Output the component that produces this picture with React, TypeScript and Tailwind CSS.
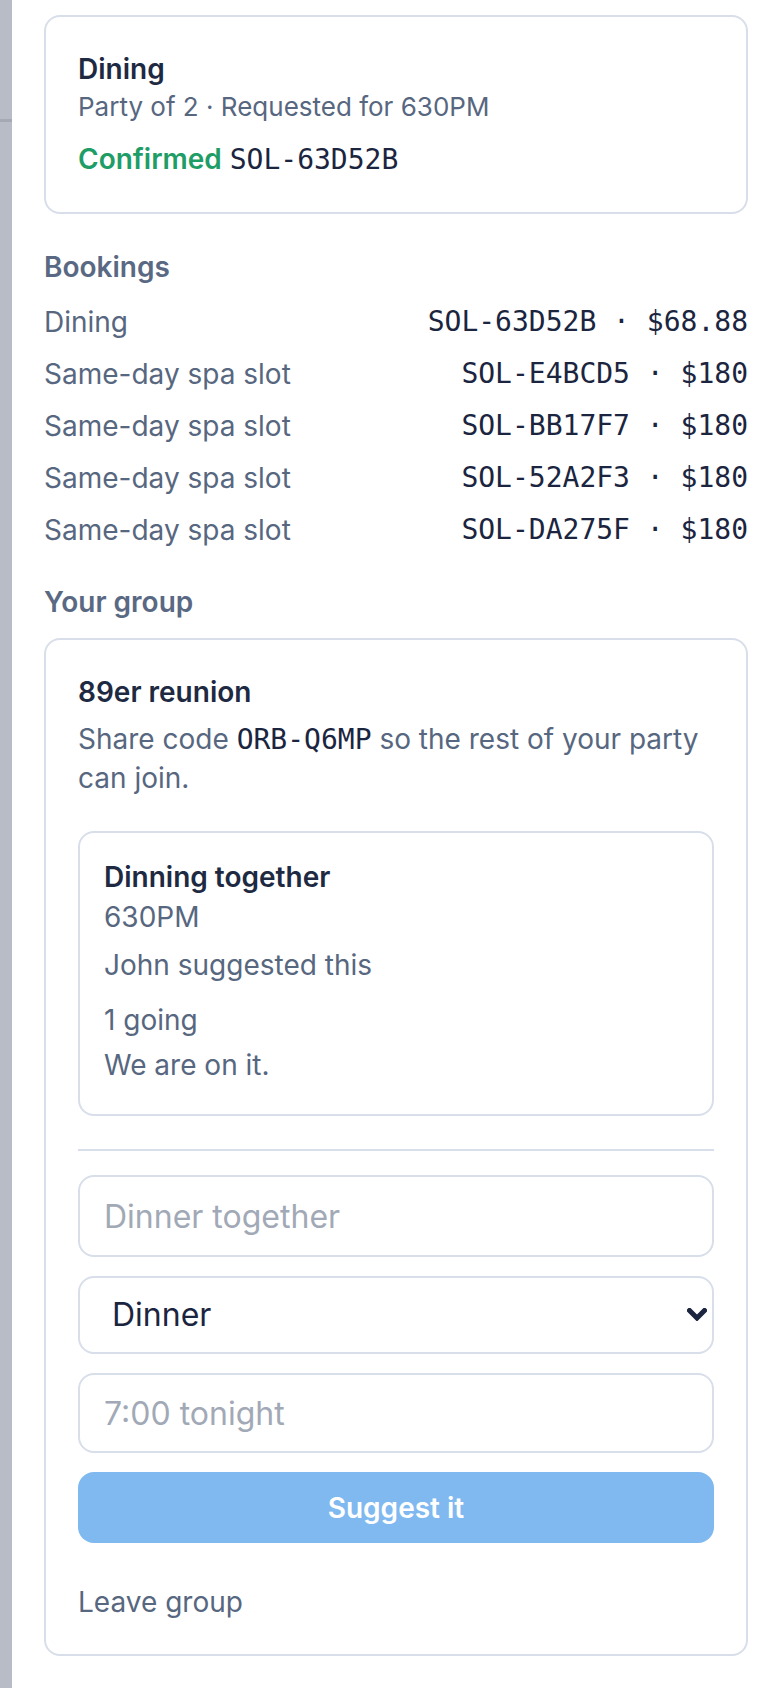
const bookings = [
  { label: 'Dining', code: 'SOL-63D52B', price: '$68.88' },
  { label: 'Same-day spa slot', code: 'SOL-E4BCD5', price: '$180' },
  { label: 'Same-day spa slot', code: 'SOL-BB17F7', price: '$180' },
  { label: 'Same-day spa slot', code: 'SOL-52A2F3', price: '$180' },
  { label: 'Same-day spa slot', code: 'SOL-DA275F', price: '$180' },
];

const sans = "font-['Inter','Liberation_Sans',sans-serif]";
const mono = "font-['DejaVu_Sans_Mono','Liberation_Mono',monospace]";

export default function App() {
  return (
    <div className={`flex min-h-[1688px] w-[780px] bg-white ${sans}`}>
      {/* Side strip */}
      <div className="w-[12px] shrink-0 bg-[#b8bcc6]">
        <div className="mt-[119px] h-[3px] bg-[#a4a9b4]"></div>
      </div>

      <div className="flex-1 pl-[32px] pr-[32px] pt-[15px]">
        {/* Current request */}
        <div className="rounded-[16px] border-2 border-[#d8deea] p-[32px]">
          <h3 className="text-[28px] leading-[40px] font-semibold text-[#1e2942]">Dining</h3>
          <p className="text-[26px] leading-[36px] text-[#57677f]">Party of 2 · Requested for 630PM</p>
          <p className="mt-[14px] text-[28px] leading-[40px]">
            <span className="font-semibold text-[#1f9d67]">Confirmed</span>{' '}
            <span className={`${mono} text-[#1b2540]`}>SOL-63D52B</span>
          </p>
        </div>

        {/* Bookings */}
        <h4 className="mt-[33px] text-[28px] leading-[40px] font-semibold text-[#5a6983]">Bookings</h4>
        <div className="mt-[13px] flex flex-col gap-[8px]">
          {bookings.map((b) => (
            <div key={b.code} className="flex h-[44px] items-center justify-between">
              <span className="text-[28px] text-[#57677f]">{b.label}</span>
              <span className={`${mono} text-[28px] text-[#1b2540]`}>
                {b.code} · {b.price}
              </span>
            </div>
          ))}
        </div>

        {/* Group */}
        <h4 className="mt-[30px] text-[28px] leading-[40px] font-semibold text-[#5a6983]">Your group</h4>
        <div className="mt-[16px] rounded-[16px] border-2 border-[#d8deea] p-[32px]">
          <h3 className="text-[28px] leading-[40px] font-semibold text-[#1e2942]">89er reunion</h3>
          <p className="mt-[8px] text-[28px] leading-[39px] text-[#57677f]">
            Share code <span className={`${mono} text-[#1b2540]`}>ORB-Q6MP</span> so the rest of your party can join.
          </p>

          <div className="mt-[33px] rounded-[16px] border-2 border-[#d8deea] px-[24px] pt-[24px] pb-[29px]">
            <h3 className="text-[28px] leading-[40px] font-semibold text-[#1e2942]">Dinning together</h3>
            <p className="text-[28px] leading-[40px] text-[#57677f]">630PM</p>
            <p className="mt-[8px] text-[28px] leading-[40px] text-[#57677f]">John suggested this</p>
            <p className="mt-[15px] text-[28px] leading-[40px] text-[#57677f]">1 going</p>
            <p className="mt-[5px] text-[28px] leading-[40px] text-[#57677f]">We are on it.</p>
          </div>

          <div className="mt-[33px] h-[2px] bg-[#d8deea]"></div>

          <div className="mt-[24px] flex flex-col gap-[19px]">
            <input
              placeholder="Dinner together"
              className="h-[82px] w-full rounded-[16px] border-2 border-[#d8deea] px-[24px] text-[32px] text-[#1b2540] outline-none placeholder:text-[#a2a9b6]"
            />
            <div className="relative">
              <select
                defaultValue="Dinner"
                className="h-[78px] w-full appearance-none rounded-[16px] border-2 border-[#d8deea] bg-white pl-[32px] pr-[60px] text-[32px] text-[#1b2540] outline-none"
              >
                <option>Dinner</option>
                <option>Lunch</option>
                <option>Drinks</option>
              </select>
              <svg
                className="pointer-events-none absolute right-[7px] top-[32px] h-[13px] w-[20px] text-[#1b2540]"
                viewBox="0 0 20 13"
                fill="none"
              >
                <path d="M2.5 2.5 L10 10 L17.5 2.5" stroke="currentColor" strokeWidth="5" strokeLinecap="square" />
              </svg>
            </div>
            <input
              placeholder="7:00 tonight"
              className="h-[80px] w-full rounded-[16px] border-2 border-[#d8deea] px-[24px] text-[32px] text-[#1b2540] outline-none placeholder:text-[#a2a9b6]"
            />
            <button
              disabled
              className="h-[71px] w-full rounded-[16px] bg-[#7fb9f0] text-[28px] font-semibold text-white"
            >
              Suggest it
            </button>
          </div>

          <button className="mt-[39px] block text-[28px] leading-[40px] text-[#57677f]">Leave group</button>
        </div>
      </div>
    </div>
  );
}
